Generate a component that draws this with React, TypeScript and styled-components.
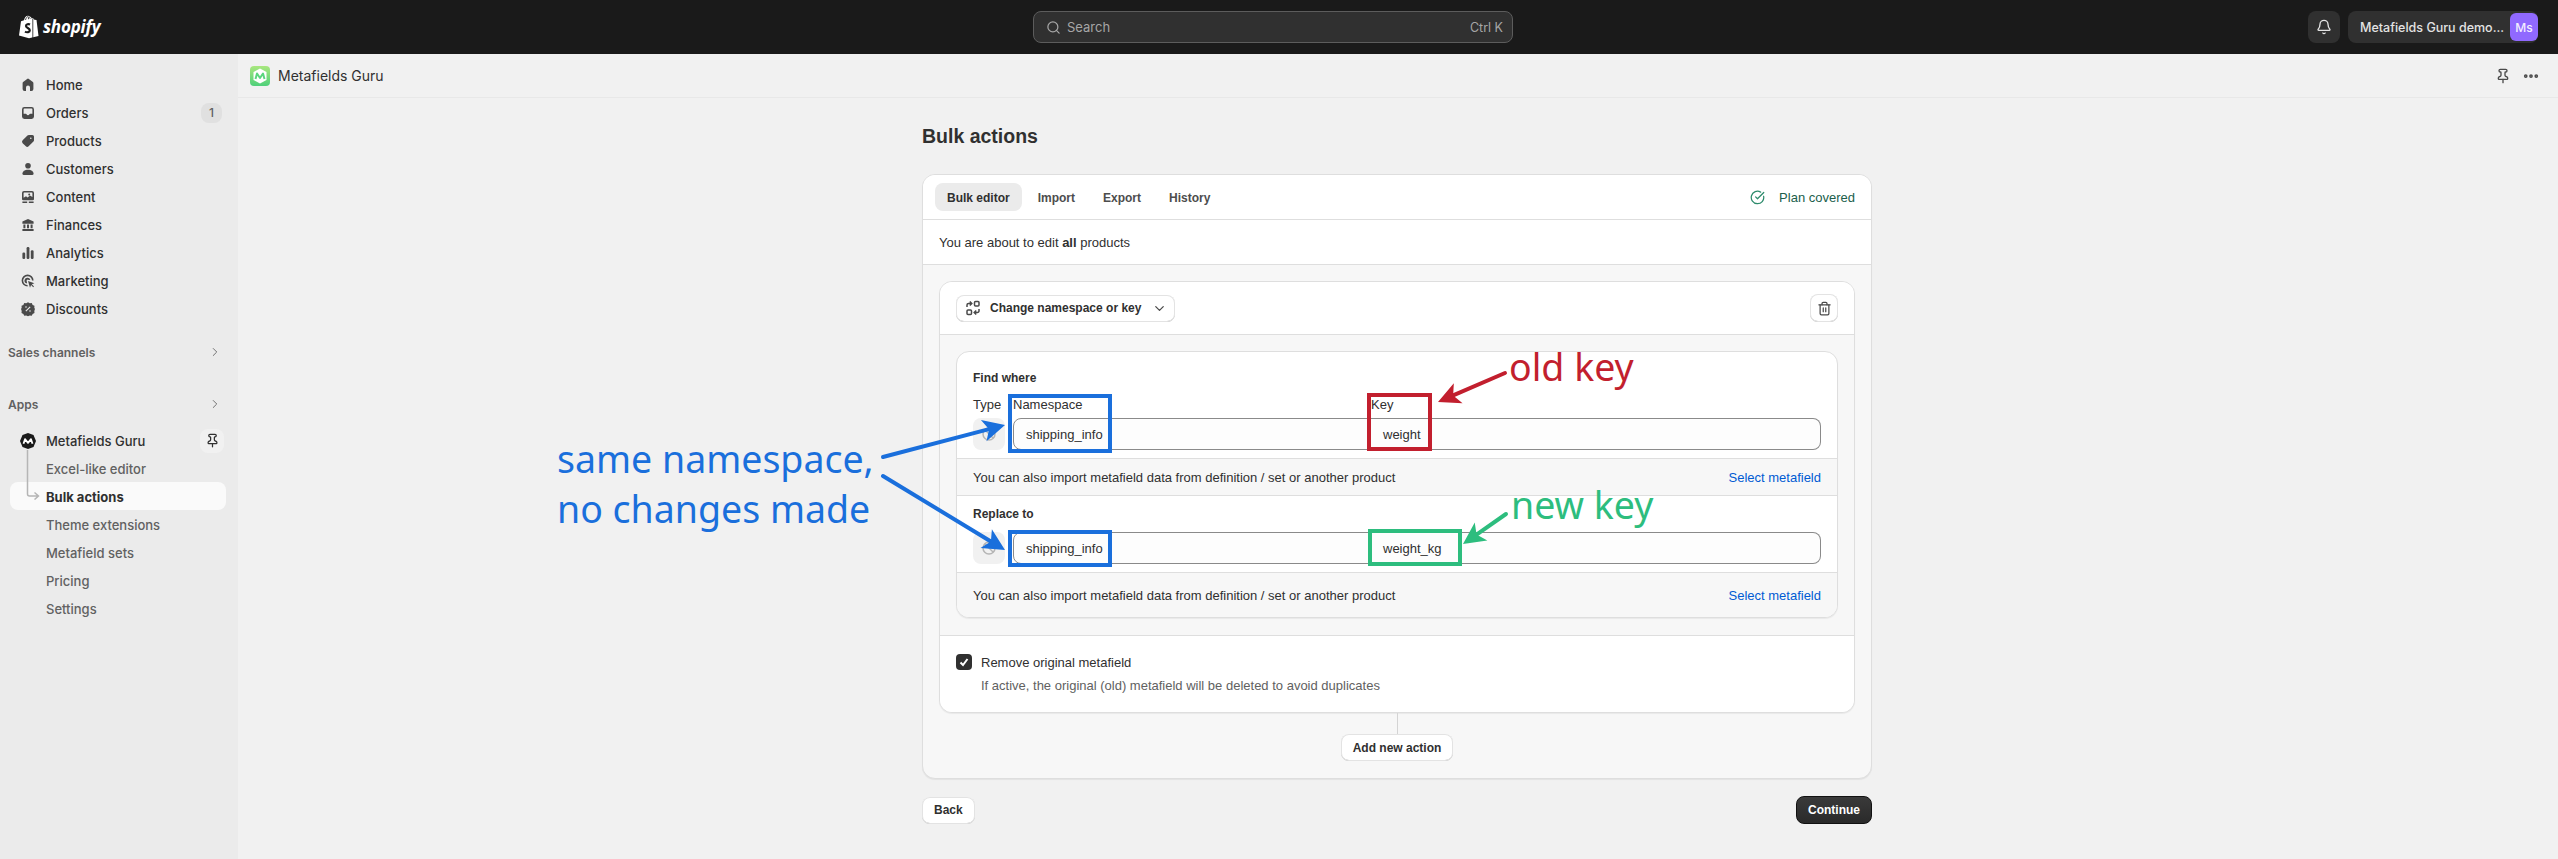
import React from 'react';
import styled, { createGlobalStyle } from 'styled-components';
import { Bell, ChevronDown, ChevronRight, CircleCheckBig, Ellipsis, Pin, Search, Trash2 } from 'lucide-react';

const GlobalStyle = createGlobalStyle`
	html, body {
		margin: 0;
		padding: 0;
		height: 859px;
		overflow: hidden;
		background: #f1f1f1;
	}
	* {
		box-sizing: border-box;
	}
`;

const Shell = styled.div`
	position: relative;
	width: 2558px;
	height: 859px;
	display: flex;
	flex-direction: column;
	font-family: 'Liberation Sans', Arial, sans-serif;
	color: #303030;
	overflow: hidden;
`;

/* top bar */
const TopBar = styled.header`
	height: 54px;
	flex: none;
	background: #1a1a1a;
	display: grid;
	grid-template-columns: 1033px 480px 1fr;
	align-items: center;
`;

const Brand = styled.div`
	display: flex;
	align-items: center;
	gap: 4px;
	padding-left: 18px;
	color: #fff;
`;

const BrandName = styled.span`
	font-family: 'Noto Sans', sans-serif;
	font-style: italic;
	font-weight: 700;
	font-size: 17px;
	letter-spacing: -0.2px;
	line-height: 24px;
`;

const SearchBox = styled.div`
	height: 32px;
	background: #303030;
	border: 1px solid #5c5c5c;
	border-radius: 8px;
	display: flex;
	align-items: center;
	gap: 6px;
	padding: 0 9px 0 12px;
	font-family: Inter, sans-serif;
	font-size: 13px;
	color: #a6a6a6;
`;

const SearchHint = styled.span`
	margin-left: auto;
	font-size: 12.5px;
`;

const TopActions = styled.div`
	display: flex;
	justify-content: flex-end;
	align-items: center;
	gap: 8px;
	padding-right: 20px;
`;

const BellButton = styled.div`
	width: 32px;
	height: 32px;
	border-radius: 8px;
	background: #303030;
	color: #e3e3e3;
	display: flex;
	align-items: center;
	justify-content: center;
`;

const Account = styled.div`
	width: 190px;
	height: 32px;
	border-radius: 8px;
	background: #303030;
	color: #e3e3e3;
	display: flex;
	align-items: center;
	justify-content: space-between;
	padding-left: 12px;
	font-family: Inter, sans-serif;
	font-size: 12.5px;
	font-weight: 500;
`;

const Avatar = styled.div`
	width: 28px;
	height: 28px;
	border-radius: 6px;
	background: #9069ff;
	color: #f3eeff;
	font-size: 12px;
	display: flex;
	align-items: center;
	justify-content: center;
`;

/* sidebar */
const Body = styled.div`
	flex: 1;
	display: flex;
	min-height: 0;
`;

const Sidebar = styled.nav`
	width: 238px;
	flex: none;
	background: #ebebeb;
	padding: 16px 12px 0 10px;
	font-family: Inter, sans-serif;
	font-size: 13px;
`;

const NavGroup = styled.div<{ $gap?: number }>`
	position: relative;
	margin-top: ${p => p.$gap || 0}px;
`;

const NavRow = styled.div<{ $active?: boolean }>`
	height: 28px;
	display: flex;
	align-items: center;
	gap: 10px;
	padding-left: 10px;
	padding-top: 1px;
	border-radius: 8px;
	font-weight: 550;
	color: #303030;
	background: ${p => (p.$active ? '#fafafa' : 'transparent')};
`;

const NavIcon = styled.span`
	width: 16px;
	height: 16px;
	flex: none;
	color: #4a4a4a;
	display: flex;
	align-items: center;
	justify-content: center;
`;

const CountBadge = styled.span`
	margin-left: auto;
	margin-right: 4px;
	width: 21px;
	height: 20px;
	border-radius: 8px;
	background: #e0e0e0;
	color: #616161;
	font-size: 12px;
	font-weight: 450;
	display: flex;
	align-items: center;
	justify-content: center;
`;

const SectionRow = styled.div`
	height: 28px;
	display: flex;
	align-items: center;
	justify-content: space-between;
	margin-left: -2px;
	padding-right: 4px;
	font-size: 12px;
	font-weight: 600;
	color: #616161;
`;

const PinButton = styled.span`
	margin-left: auto;
	margin-right: 2px;
	width: 24px;
	height: 24px;
	border-radius: 8px;
	background: #f1f1f1;
	color: #303030;
	display: flex;
	align-items: center;
	justify-content: center;
`;

const SubRow = styled.div<{ $active?: boolean }>`
	height: 28px;
	display: flex;
	align-items: center;
	padding-left: 36px;
	padding-top: 1px;
	border-radius: 8px;
	font-weight: ${p => (p.$active ? 650 : 450)};
	color: ${p => (p.$active ? '#303030' : '#616161')};
	background: ${p => (p.$active ? '#fafafa' : 'transparent')};
`;

const TreeLine = styled.svg`
	position: absolute;
	left: 16px;
	top: 24px;
	color: #b5b5b5;
`;

/* main area */
const Main = styled.main`
	flex: 1;
	display: flex;
	flex-direction: column;
	min-width: 0;
`;

const AppBar = styled.div`
	height: 44px;
	flex: none;
	border-bottom: 1px solid #e8e8e8;
	display: flex;
	align-items: center;
	gap: 8px;
	padding: 0 18px 0 12px;
	font-family: Inter, sans-serif;
	font-size: 14px;
	color: #303030;
`;

const AppBarTools = styled.div`
	margin-left: auto;
	display: flex;
	align-items: center;
	gap: 11px;
	color: #4a4a4a;
`;

const Page = styled.div`
	width: 950px;
	margin: 0 auto;
	transform: translateX(-1px);
	padding-top: 26px;
`;

const Title = styled.h1`
	margin: 0 0 26px;
	font-size: 19.5px;
	line-height: 24px;
	font-weight: 700;
	color: #303030;
`;

const Card = styled.section`
	background: #f7f7f7;
	border: 1px solid #dedede;
	border-radius: 13px;
	box-shadow: 0 1px 1px rgba(0, 0, 0, 0.06);
	overflow: hidden;
`;

const TabBar = styled.div`
	height: 45px;
	background: #fff;
	border-bottom: 1px solid #dedede;
	display: flex;
	align-items: center;
	gap: 4px;
	padding: 0 16px 0 12px;
`;

const Tab = styled.div<{ $active?: boolean }>`
	height: 28px;
	padding: 1px 12px 0;
	border-radius: 8px;
	display: flex;
	align-items: center;
	font-size: 12px;
	font-weight: 700;
	color: ${p => (p.$active ? '#303030' : '#4d4d4d')};
	background: ${p => (p.$active ? '#ebebeb' : 'transparent')};
`;

const PlanStatus = styled.div`
	margin-left: auto;
	display: flex;
	align-items: center;
	gap: 14px;
	font-size: 13px;
	color: #205e4b;
`;

const IntroRow = styled.div`
	height: 45px;
	background: #fff;
	border-bottom: 1px solid #dedede;
	padding-left: 16px;
	display: flex;
	align-items: center;
	font-size: 13px;
	white-space: pre;
`;

const CardBody = styled.div`
	padding: 16px 16px 17px;
	display: flex;
	flex-direction: column;
	align-items: center;
`;

const ActionCard = styled.div`
	width: 100%;
	background: #f7f7f7;
	border: 1px solid #dedede;
	border-radius: 13px;
	box-shadow: 0 1px 1px rgba(0, 0, 0, 0.06);
	overflow: hidden;
`;

const ActionHeader = styled.div`
	height: 53px;
	background: #fff;
	border-bottom: 1px solid #dedede;
	display: flex;
	align-items: center;
	justify-content: space-between;
	padding: 0 16px;
`;

const PlainButton = styled.div`
	height: 27px;
	background: #fff;
	border-radius: 8px;
	box-shadow: inset 0 0 0 1px #e3e3e3, inset 0 -1px 0 #b5b5b5;
	display: flex;
	align-items: center;
	font-size: 12px;
	font-weight: 700;
	color: #303030;
	white-space: nowrap;
`;

const TypeMenu = styled(PlainButton)`
	width: 219px;
	padding: 0 8px 0 9px;
	gap: 9px;

	svg {
		flex: none;
	}
`;

const MenuCaret = styled.span`
	margin-left: auto;
	display: flex;
	color: #4a4a4a;
`;

const IconButton = styled(PlainButton)`
	width: 28px;
	height: 28px;
	justify-content: center;
	color: #4a4a4a;
`;

const TextButton = styled(PlainButton)`
	padding: 0 12px;
	justify-content: center;
`;

const ActionContent = styled.div`
	padding: 16px 16px 17px;
`;

const FindBox = styled.div`
	background: #fff;
	border: 1px solid #dedede;
	border-radius: 13px;
	box-shadow: 0 1px 1px rgba(0, 0, 0, 0.06);
	overflow: hidden;
`;

const FindSection = styled.div<{ $top: number }>`
	padding: ${p => p.$top}px 16px 8px;
	border-bottom: 1px solid #dedede;
`;

const SectionTitle = styled.div<{ $gap: number }>`
	font-size: 12px;
	line-height: 16px;
	font-weight: 700;
	color: #303030;
	margin-bottom: ${p => p.$gap}px;
`;

const FieldGrid = styled.div`
	display: grid;
	grid-template-columns: 40px 358px 1fr;
	font-size: 13px;
`;

const FieldLabel = styled.div`
	height: 21px;
	line-height: 16px;
	color: #303030;
`;

const TypeChip = styled.div`
	width: 32px;
	height: 32px;
	border-radius: 8px;
	background: #f1f1f1;
	color: #b5b5b5;
	display: flex;
	align-items: center;
	justify-content: center;
`;

const FieldInput = styled.div<{ $side: 'left' | 'right' }>`
	height: 32px;
	background: #fdfdfd;
	border: 1px solid #8a8a8a;
	border-left-width: ${p => (p.$side === 'left' ? 1 : 0)}px;
	border-radius: ${p => (p.$side === 'left' ? '8px 0 0 8px' : '0 8px 8px 0')};
	display: flex;
	align-items: center;
	padding-left: 12px;
	color: #303030;
`;

const ImportRow = styled.div<{ $height: number; $last?: boolean }>`
	height: ${p => p.$height}px;
	background: #f7f7f7;
	border-bottom: ${p => (p.$last ? 'none' : '1px solid #dedede')};
	display: flex;
	align-items: center;
	justify-content: space-between;
	padding: 0 16px;
	font-size: 13px;
	color: #303030;
`;

const MetaLink = styled.span`
	color: #005bd3;
`;

const RemoveSection = styled.div`
	background: #fff;
	border-top: 1px solid #dedede;
	padding: 18px 16px 18px;
	font-size: 13px;
`;

const CheckRow = styled.div`
	height: 16px;
	display: flex;
	align-items: center;
	gap: 9px;
`;

const CheckBox = styled.span`
	width: 16px;
	height: 16px;
	border-radius: 4px;
	background: #303030;
	color: #fff;
	display: flex;
	align-items: center;
	justify-content: center;
`;

const HintText = styled.div`
	margin: 8px 0 0 25px;
	line-height: 16px;
	color: #616161;
`;

const Connector = styled.div`
	width: 1px;
	height: 21px;
	background: #d4d4d4;
`;

const Footer = styled.div`
	margin-top: 17px;
	display: flex;
	align-items: center;
	justify-content: space-between;
`;

const PrimaryButton = styled.div`
	height: 28px;
	padding: 0 11px;
	border-radius: 8px;
	background: linear-gradient(#3a3a3a, #2a2a2a);
	border: 1px solid #111;
	color: #fff;
	font-size: 12px;
	font-weight: 700;
	display: flex;
	align-items: center;
`;

/* hand-drawn notes over the screenshot */
const NoteLayer = styled.svg`
	position: absolute;
	left: 0;
	top: 0;
	pointer-events: none;
`;

const NoteText = styled.div<{ $color: string; $x: number; $y: number }>`
	position: absolute;
	left: ${p => p.$x}px;
	top: ${p => p.$y}px;
	font-family: 'Noto Sans', sans-serif;
	font-size: 37.5px;
	line-height: 50px;
	white-space: pre;
	color: ${p => p.$color};
`;

const BLUE = '#1a6fdc';
const RED = '#c21f2e';
const GREEN = '#2dbd7e';

const Glyph: React.FC<{ children: React.ReactNode; size?: number }> = ({ children, size = 20 }) => (
	<svg width={size} height={size} viewBox="0 0 20 20" fill="currentColor" fillRule="evenodd">
		{children}
	</svg>
);

const navIcons: Record<string, React.ReactNode> = {
	Home: <path d="M8.9 2.4a1.75 1.75 0 0 1 2.2 0l5 4a1.75 1.75 0 0 1 .65 1.4V15a2.5 2.5 0 0 1-2.5 2.5H12.5V13a2.5 2.5 0 0 0-5 0v4.5H5.75A2.5 2.5 0 0 1 3.25 15V7.8a1.75 1.75 0 0 1 .65-1.4z" />,
	Orders: <path d="M5.5 2.5h9A3 3 0 0 1 17.5 5.5v9a3 3 0 0 1-3 3h-9a3 3 0 0 1-3-3v-9a3 3 0 0 1 3-3zM4.5 5.5V11h2.7c.6 0 1 .3 1.2.8.2.6.8 1 1.6 1s1.4-.4 1.6-1c.2-.5.6-.8 1.2-.8h2.7V5.5a1 1 0 0 0-1-1h-9a1 1 0 0 0-1 1z" />,
	Products: <path d="M11 2.5h4.5a2 2 0 0 1 2 2V9a2.5 2.5 0 0 1-.7 1.7l-6 6a2.5 2.5 0 0 1-3.5 0l-4-4a2.5 2.5 0 0 1 0-3.5l6-6A2.5 2.5 0 0 1 11 2.5zm2.5 3a1 1 0 1 0 0 2 1 1 0 0 0 0-2z" />,
	Customers: (
		<>
			<circle cx="10" cy="6" r="3.5" />
			<path d="M3 16c0-3.2 2.8-5.2 7-5.2s7 2 7 5.2c0 .9-.6 1.5-1.5 1.5h-11C3.600 17.500 3 16.900 3 16z" />
		</>
	),
	Content: <path d="M5 2.500h10A2.500 2.500 0 0 1 17.500 5v7.500a1.500 1.500 0 0 1-1.500 1.500H4a1.500 1.500 0 0 1-1.500-1.500V5A2.500 2.500 0 0 1 5 2.500zM4.500 5v6l3-2 2 1.500 3-2.500 3 2V5a.5.5 0 0 0-.5-.5H5a.5.5 0 0 0-.5.5zM3 15.750h6v1.750H3zM11 15.750h6v1.750h-6zM11.500 5.500a1.250 1.250 0 1 1 0 2.500 1.250 1.250 0 0 1 0-2.500z" />,
	Finances: <path d="M10 2.500l7 3.250V8.500H3V5.750zM4.250 9.500h2.500v4.500h-2.500zM8.750 9.500h2.500v4.500h-2.500zM13.250 9.500h2.500v4.500h-2.500zM3 15h14v2.500H3z" />,
	Analytics: (
		<>
			<rect x="3" y="9.500" width="3.500" height="8" rx="1.500" />
			<rect x="8.250" y="2.500" width="3.500" height="15" rx="1.500" />
			<rect x="13.500" y="6.500" width="3.500" height="11" rx="1.500" />
		</>
	),
	Marketing: (
		<>
			<path d="M9.500 2a7.500 7.500 0 0 1 7.500 7.500h-2a5.500 5.500 0 1 0-5.500 5.500v2a7.500 7.500 0 0 1 0-15z" />
			<path d="M9.500 6a3.500 3.500 0 0 1 3.400 2.700h-2A1.500 1.500 0 1 0 8.700 11v2A3.500 3.500 0 0 1 9.500 6z" />
			<path d="M10 10l8 2.800-3.200 1.300 2.700 2.700-1 1-2.700-2.700-1.300 3.200z" />
		</>
	),
	Discounts: (
		<path d="M10 1.500l2.200 1.300 2.500-.2 1.100 2.300 2.300 1.100-.2 2.500L18.700 10l-.8 2.500.2 2.500-2.300 1.100-1.100 2.300-2.500-.2L10 19l-2.200-.8-2.500.2-1.100-2.300-2.300-1.100.2-2.500L1.300 10l.8-1.500-.2-2.500 2.300-1.100 1.100-2.300 2.500.2zM12.200 6.800L6.800 12.200l1 1 5.400-5.400zM7.500 6.500a1 1 0 1 0 0 2 1 1 0 0 0 0-2zM12.500 11.500a1 1 0 1 0 0 2 1 1 0 0 0 0-2z" />
	),
};

const navItems = ['Home', 'Orders', 'Products', 'Customers', 'Content', 'Finances', 'Analytics', 'Marketing', 'Discounts'];
const subItems = ['Excel-like editor', 'Bulk actions', 'Theme extensions', 'Metafield sets', 'Pricing', 'Settings'];

const ShopifyBag = () => (
	<svg width="21" height="24" viewBox="0 0 21 24">
		<path fill="#fff" d="M1 20.500L3 6.200 6 5.300C6.500 2.800 8 .8 10 .8c.7 0 1.200.3 1.600.8 1 0 1.700.8 2.100 2l1.300-.3 1.500 1.500 2 .2L20.500 21 11 23.200z" />
		<path fill="none" stroke="#1a1a1a" strokeWidth=".8" d="M7.500 5C8 3 9 1.600 10.200 1.600M10.500 4.200V3c0-.6 0-1-.3-1.300M12.200 3.800C12 3 11.800 2.500 11.300 2.200" />
		<path fill="none" stroke="#1a1a1a" strokeWidth="2.200" d="M12 9.500c-1.500-.7-4-.3-4 1.500 0 2 3.800 2 3.800 4.300 0 2-2.800 2.500-4.800 1.300" />
		<path fill="none" stroke="#1a1a1a" strokeWidth=".8" d="M14.800 4v19" />
	</svg>
);

const AppTile = () => (
	<svg width="20" height="20" viewBox="0 0 20 20">
		<defs>
			<linearGradient id="tile" x1="0" y1="0" x2="0" y2="1">
				<stop offset="0" stopColor="#a9e77f" />
				<stop offset="1" stopColor="#4fd07a" />
			</linearGradient>
		</defs>
		<rect width="20" height="20" rx="4" fill="url(#tile)" />
		<path fill="#fff" d="M10 2.500l6.500 3.500v8L10 17.500 3.500 14V6z" />
		<path fill="none" stroke="#5ad67e" strokeWidth="2" strokeLinejoin="round" d="M5.500 13l1.500-5.500 3 4.500 3-4.500 1.500 5.500" />
	</svg>
);

const AppHex = () => (
	<svg width="16" height="16" viewBox="0 0 16 16">
		<path fill="#1a1a1a" d="M8 0l5.500 2L16 8l-2.500 6L8 16l-5.500-2L0 8l2.500-6z" />
		<path fill="none" stroke="#fff" strokeWidth="1.800" strokeLinejoin="round" d="M3.500 10.800l1.500-4.600 3 3.600 3-3.600 1.500 4.600" />
	</svg>
);

const SwapIcon = () => (
	<svg width="16" height="16" viewBox="0 0 16 16" fill="none" stroke="#4a4a4a" strokeWidth="1.500">
		<rect x="9.500" y="1.500" width="4.500" height="4.500" rx="1" />
		<rect x="2" y="10" width="4.500" height="4.500" rx="1" />
		<path d="M2 7V5a1.500 1.500 0 0 1 1.500-1.500H6.500M4.800 1.500l2 2-2 2M14 9v2a1.500 1.500 0 0 1-1.500 1.500H9.500M11.200 10.500l-2 2 2 2" />
	</svg>
);

const TypeIcon = () => (
	<svg width="16" height="16" viewBox="0 0 16 16" fill="none" stroke="currentColor" strokeWidth="1.500">
		<circle cx="8" cy="8" r="6" />
		<path d="M4 4l8 8" />
	</svg>
);

const Arrow: React.FC<{ x1: number; y1: number; x2: number; y2: number; color: string; width?: number; head?: number }> = ({
	x1,
	y1,
	x2,
	y2,
	color,
	width = 4,
	head = 22,
}) => {
	const len = Math.hypot(x2 - x1, y2 - y1);
	const ux = (x2 - x1) / len;
	const uy = (y2 - y1) / len;
	const bx = x2 - ux * head;
	const by = y2 - uy * head;
	const nx = x2 - ux * head * 0.75;
	const ny = y2 - uy * head * 0.75;
	const half = head * 0.5;
	const points = [
		`${x2},${y2}`,
		`${bx - uy * half},${by + ux * half}`,
		`${nx},${ny}`,
		`${bx + uy * half},${by - ux * half}`,
	].join(' ');
	return (
		<g>
			<line x1={x1} y1={y1} x2={nx} y2={ny} stroke={color} strokeWidth={width} strokeLinecap="round" />
			<polygon points={points} fill={color} />
		</g>
	);
};

const Frame: React.FC<{ x: number; y: number; w: number; h: number; color: string }> = ({ x, y, w, h, color }) => (
	<rect x={x + 2} y={y + 2} width={w - 4} height={h - 4} fill="none" stroke={color} strokeWidth="4" />
);

const Notes = () => (
	<>
		<NoteLayer width="2558" height="859">
			<Frame x={1008} y={394} w={104} h={59} color={BLUE} />
			<Frame x={1008} y={530} w={104} h={37} color={BLUE} />
			<Frame x={1367} y={393} w={65} h={58} color={RED} />
			<Frame x={1368} y={529} w={94} h={37} color={GREEN} />
			<Arrow x1={883} y1={457} x2={1005} y2={425} color={BLUE} />
			<Arrow x1={883} y1={476} x2={1005} y2={550} color={BLUE} />
			<Arrow x1={1505} y1={373} x2={1438} y2={402} color={RED} />
			<Arrow x1={1506} y1={514} x2={1463} y2={544} color={GREEN} />
		</NoteLayer>
		<NoteText $color={BLUE} $x={557} $y={434}>{'same namespace,\nno changes made'}</NoteText>
		<NoteText $color={RED} $x={1509} $y={342}>old key</NoteText>
		<NoteText $color={GREEN} $x={1511} $y={480}>new key</NoteText>
	</>
);

const FieldRow: React.FC<{ labels?: boolean; name: string }> = ({ labels, name }) => (
	<FieldGrid>
		{labels && (
			<>
				<FieldLabel>Type</FieldLabel>
				<FieldLabel>Namespace</FieldLabel>
				<FieldLabel>Key</FieldLabel>
			</>
		)}
		<TypeChip>
			<TypeIcon />
		</TypeChip>
		<FieldInput $side="left">shipping_info</FieldInput>
		<FieldInput $side="right">{name}</FieldInput>
	</FieldGrid>
);

export default function App() {
	return (
		<Shell>
			<GlobalStyle />
			<TopBar>
				<Brand>
					<ShopifyBag />
					<BrandName>shopify</BrandName>
				</Brand>
				<SearchBox>
					<Search size={15} />
					Search
					<SearchHint>Ctrl K</SearchHint>
				</SearchBox>
				<TopActions>
					<BellButton>
						<Bell size={16} />
					</BellButton>
					<Account>
						Metafields Guru demo...
						<Avatar>Ms</Avatar>
					</Account>
				</TopActions>
			</TopBar>
			<Body>
				<Sidebar>
					<NavGroup>
						{navItems.map(item => (
							<NavRow key={item}>
								<NavIcon>
									<Glyph size={16}>{navIcons[item]}</Glyph>
								</NavIcon>
								{item}
								{item === 'Orders' && <CountBadge>1</CountBadge>}
							</NavRow>
						))}
					</NavGroup>
					<NavGroup $gap={16}>
						<SectionRow>
							Sales channels
							<ChevronRight size={14} strokeWidth={1.5} />
						</SectionRow>
					</NavGroup>
					<NavGroup $gap={24}>
						<SectionRow>
							Apps
							<ChevronRight size={14} strokeWidth={1.5} />
						</SectionRow>
					</NavGroup>
					<NavGroup $gap={8}>
						<NavRow>
							<NavIcon>
								<AppHex />
							</NavIcon>
							Metafields Guru
							<PinButton>
								<Pin size={15} />
							</PinButton>
						</NavRow>
						{subItems.map(item => (
							<SubRow key={item} $active={item === 'Bulk actions'}>
								{item}
							</SubRow>
						))}
						<TreeLine width="26" height="50" viewBox="0 0 26 50" fill="none" stroke="currentColor" strokeWidth="1.500">
							<path d="M1.500 0v44a2 2 0 0 0 2 2H12M8.500 42.500l4 3.500-4 3.500" />
						</TreeLine>
					</NavGroup>
				</Sidebar>
				<Main>
					<AppBar>
						<AppTile />
						Metafields Guru
						<AppBarTools>
							<Pin size={16} />
							<Ellipsis size={18} strokeWidth={3} />
						</AppBarTools>
					</AppBar>
					<Page>
						<Title>Bulk actions</Title>
						<Card>
							<TabBar>
								<Tab $active>Bulk editor</Tab>
								<Tab>Import</Tab>
								<Tab>Export</Tab>
								<Tab>History</Tab>
								<PlanStatus>
									<CircleCheckBig size={15} color="#2e8b6c" />
									Plan covered
								</PlanStatus>
							</TabBar>
							<IntroRow>
								You are about to edit <b>all</b> products
							</IntroRow>
							<CardBody>
								<ActionCard>
									<ActionHeader>
										<TypeMenu>
											<SwapIcon />
											Change namespace or key
											<MenuCaret>
												<ChevronDown size={15} />
											</MenuCaret>
										</TypeMenu>
										<IconButton>
											<Trash2 size={15} />
										</IconButton>
									</ActionHeader>
									<ActionContent>
										<FindBox>
											<FindSection $top={18}>
												<SectionTitle $gap={11}>Find where</SectionTitle>
												<FieldRow labels name="weight" />
											</FindSection>
											<ImportRow $height={37}>
												You can also import metafield data from definition / set or another product
												<MetaLink>Select metafield</MetaLink>
											</ImportRow>
											<FindSection $top={10}>
												<SectionTitle $gap={10}>Replace to</SectionTitle>
												<FieldRow name="weight_kg" />
											</FindSection>
											<ImportRow $height={44} $last>
												You can also import metafield data from definition / set or another product
												<MetaLink>Select metafield</MetaLink>
											</ImportRow>
										</FindBox>
									</ActionContent>
									<RemoveSection>
										<CheckRow>
											<CheckBox>
												<svg width="12" height="12" viewBox="0 0 12 12" fill="none" stroke="currentColor" strokeWidth="2">
													<path d="M2.500 6.500l2.500 2.500 4.500-6" />
												</svg>
											</CheckBox>
											Remove original metafield
										</CheckRow>
										<HintText>If active, the original (old) metafield will be deleted to avoid duplicates</HintText>
									</RemoveSection>
								</ActionCard>
								<Connector />
								<TextButton>Add new action</TextButton>
							</CardBody>
						</Card>
						<Footer>
							<TextButton>Back</TextButton>
							<PrimaryButton>Continue</PrimaryButton>
						</Footer>
					</Page>
				</Main>
			</Body>
			<Notes />
		</Shell>
	);
}
